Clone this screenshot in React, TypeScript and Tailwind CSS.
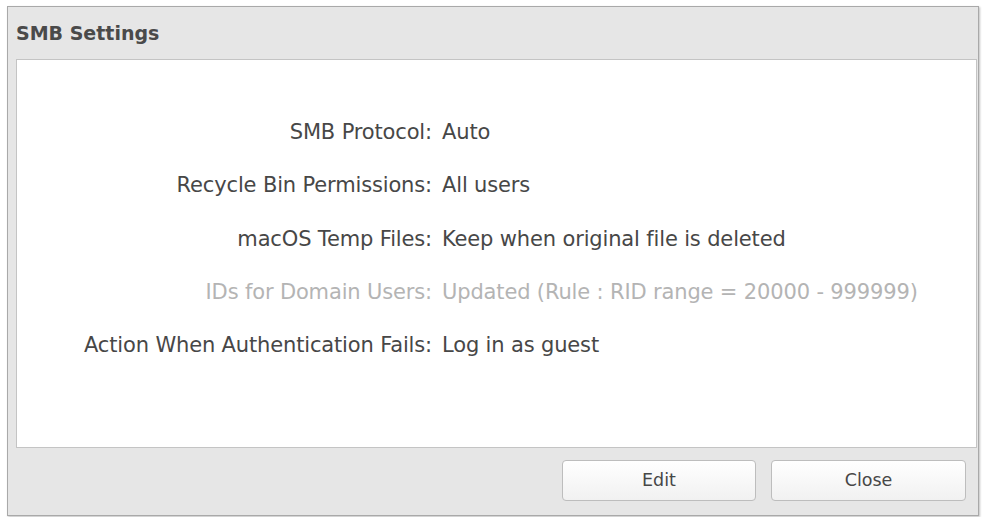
import React from "react"

const rows = [
  { label: "SMB Protocol:", value: "Auto" },
  { label: "Recycle Bin Permissions:", value: "All users" },
  { label: "macOS Temp Files:", value: "Keep when original file is deleted" },
  { label: "IDs for Domain Users:", value: "Updated (Rule : RID range = 20000 - 999999)", disabled: true },
  { label: "Action When Authentication Fails:", value: "Log in as guest" },
]

export default function App() {
  return (
    <div className="w-[987px] h-[517px] bg-white pt-[6px] pl-[7px]" style={{ fontFamily: "'DejaVu Sans', 'Noto Sans', sans-serif" }}>
      <div className="w-[972px] h-[510px] flex flex-col bg-[#e6e6e6] border border-[#a9a9a9] shadow-[1px_1px_2px_rgba(0,0,0,0.25)]">
        <div className="h-[52px] flex items-center pl-[8px]">
          <span className="text-[19px] font-bold text-[#4a4a4a]">SMB Settings</span>
        </div>
        <div className="ml-[8px] mr-[1px] h-[389px] bg-white border border-[#c4c4c4] pt-[60px]">
          <div className="grid grid-cols-[415px_1fr] gap-x-[10px] gap-y-[28.25px] text-[21px] leading-[25px] tracking-[-0.15px]">
            {rows.map((r) => (
              <React.Fragment key={r.label}>
                <div className={`text-right ${r.disabled ? "text-[#b4b4b4]" : "text-[#474747]"}`}>{r.label}</div>
                <div className={r.disabled ? "text-[#b4b4b4]" : "text-[#474747]"}>{r.value}</div>
              </React.Fragment>
            ))}
          </div>
        </div>
        <div className="flex-1 flex items-start justify-end gap-[15px] pt-[12px] pr-[12px]">
          <button className="w-[194px] h-[41px] rounded-[4px] border border-[#bdbdbd] bg-gradient-to-b from-white to-[#f1f1f1] text-[17.5px] text-[#474747]">Edit</button>
          <button className="w-[195px] h-[41px] rounded-[4px] border border-[#bdbdbd] bg-gradient-to-b from-white to-[#f1f1f1] text-[17.5px] text-[#474747]">Close</button>
        </div>
      </div>
    </div>
  )
}
